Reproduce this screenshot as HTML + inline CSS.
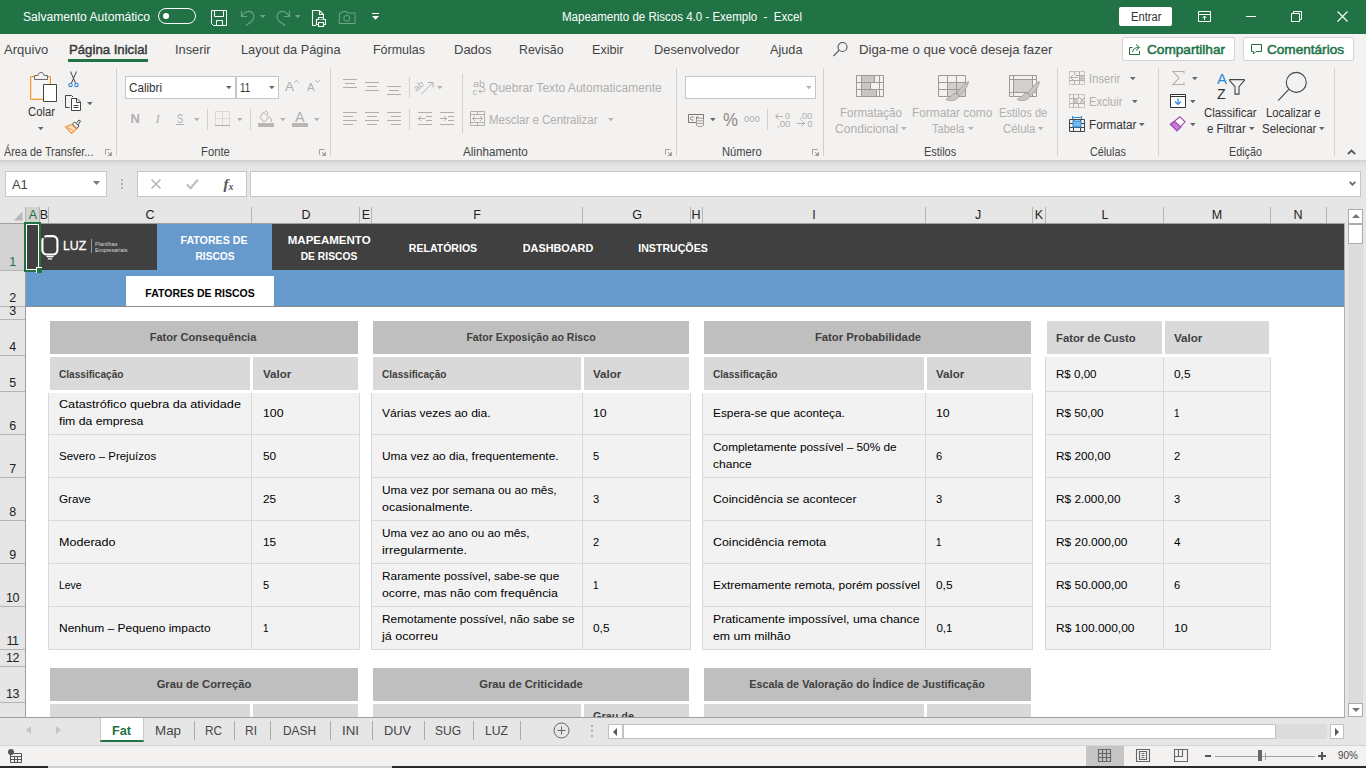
<!DOCTYPE html>
<html lang="pt-BR"><head><meta charset="utf-8"><title>Mapeamento de Riscos 4.0 - Exemplo - Excel</title>
<style>
*{box-sizing:border-box;margin:0;padding:0}
html,body{width:1366px;height:768px;overflow:hidden;background:#f3f2f1}
body{font-family:"Liberation Sans",sans-serif;font-size:12px;color:#3b3b3b;position:relative}
.a{position:absolute;white-space:nowrap}
.t{position:absolute;white-space:nowrap;line-height:1;transform-origin:left center}
.tc{position:absolute;white-space:nowrap;line-height:1;text-align:center;transform-origin:center center}
svg{position:absolute;overflow:visible}
.sep{position:absolute;width:1px;background:#d2d0ce}
.dd{position:absolute;width:5.6px;height:3.3px;color:#666;background:currentColor;clip-path:polygon(0 0,100% 0,50% 100%)}
.dd.g{color:#b5b3b1}
</style></head>
<body>
<div class="a" style="left:0px;top:0px;width:1366px;height:34px;background:#217346;"></div>
<div class="t" style="top:11.00px;font-size:12px;color:#fff;left:23.00px;transform:scaleX(1.0073);">Salvamento Automático</div>
<div class="a" style="left:158px;top:8px;width:38px;height:16px;border:1px solid #fff;border-radius:8px"></div>
<div class="a" style="left:163px;top:13px;width:6px;height:6px;border-radius:3px;background:#fff"></div>
<svg style="left:211px;top:10px" width="16" height="16" viewBox="0 0 16 16" fill="none" stroke="#fff" stroke-width="1"><path d="M0.500 0.500h15v15h-13l-2-2z"/><path d="M3.500 0.500v6h9v-6"/><path d="M5.500 15.500v-5h6v5"/></svg>
<svg style="left:240px;top:10px" width="16" height="16" viewBox="0 0 16 16" fill="none" stroke="#6fa585" stroke-width="1.100"><path d="M1.500 1v5.500h5.500"/><path d="M2 6C4 2 8.500 0 12 2.500c3 2.500 2.500 6-0.500 9L6 15.500"/></svg>
<div class="dd" style="left:260px;top:15px;color:#6fa585"></div>
<svg style="left:275px;top:10px" width="16" height="16" viewBox="0 0 16 16" fill="none" stroke="#6fa585" stroke-width="1.100"><path d="M14.500 1v5.500h-5.500"/><path d="M14 6C12 2 7.500 0 4 2.500c-3 2.500-2.500 6 0.500 9L10 15.500"/></svg>
<div class="dd" style="left:295px;top:15px;color:#6fa585"></div>
<svg style="left:311px;top:9.500px" width="16" height="17" viewBox="0 0 16 17" fill="none" stroke="#fff" stroke-width="1.100"><path d="M5 15.500h-3.500v-15h7l4 4v3"/><path d="M8.500 0.500v4h4"/><path d="M5.500 9.500h9v5h-9z" fill="#217346"/><path d="M7.500 9.500v-2h5v2M7.500 12.500h5v4h-5z" fill="#217346"/></svg>
<svg style="left:339px;top:11px" width="17" height="13" viewBox="0 0 17 13" fill="none" stroke="#6fa585" stroke-width="1"><path d="M0.500 2h2l0.500-1.500h4.500l0.500 1.500h8v10.500h-16z"/><circle cx="7.800" cy="7.300" r="3"/></svg>
<div class="a" style="left:372px;top:13px;width:7px;height:1px;background:#fff"></div><div class="dd" style="left:372px;top:16px;width:7px;height:3.700px;color:#fff"></div>
<div class="t" style="top:11.00px;font-size:12px;color:#fff;left:562.00px;transform:scaleX(0.9596);">Mapeamento de Riscos 4.0 - Exemplo  -  Excel</div>
<div class="a" style="left:1119px;top:7px;width:53px;height:19px;background:#fff;border-radius:2px;"></div>
<div class="t" style="top:11.00px;font-size:12px;color:#333;left:1130.60px;transform:scaleX(0.9300);">Entrar</div>
<svg style="left:1198px;top:11px" width="13" height="11" viewBox="0 0 13 11" fill="none" stroke="#fff" stroke-width="1"><path d="M0.500 0.500h12v10h-12z"/><path d="M0.500 3.500h12"/><path d="M6.500 9v-4M4.500 7l2-2 2 2"/></svg>
<div class="a" style="left:1246px;top:16px;width:10px;height:1px;background:#fff;"></div>
<svg style="left:1291px;top:11px" width="11" height="11" viewBox="0 0 11 11" fill="none" stroke="#fff" stroke-width="1"><path d="M0.500 2.500h8v8h-8z"/><path d="M2.500 2.500v-2h8v8h-2"/></svg>
<svg style="left:1337px;top:11px" width="11" height="11" viewBox="0 0 11 11" fill="none" stroke="#fff" stroke-width="1.100"><path d="M0.500 0.500l10 10M10.500 0.500l-10 10"/></svg>
<div class="t" style="top:43.00px;font-size:13px;color:#444;left:4.10px;">Arquivo</div>
<div class="t" style="top:43.00px;font-size:13px;color:#444;left:175.00px;transform:scaleX(0.9827);">Inserir</div>
<div class="t" style="top:43.00px;font-size:13px;color:#444;left:241.00px;transform:scaleX(0.9832);">Layout da Página</div>
<div class="t" style="top:43.00px;font-size:13px;color:#444;left:372.50px;transform:scaleX(0.9596);">Fórmulas</div>
<div class="t" style="top:43.00px;font-size:13px;color:#444;left:454.00px;">Dados</div>
<div class="t" style="top:43.00px;font-size:13px;color:#444;left:519.00px;transform:scaleX(0.9474);">Revisão</div>
<div class="t" style="top:43.00px;font-size:13px;color:#444;left:592.00px;transform:scaleX(0.9688);">Exibir</div>
<div class="t" style="top:43.00px;font-size:13px;color:#444;left:653.50px;transform:scaleX(0.9859);">Desenvolvedor</div>
<div class="t" style="top:43.00px;font-size:13px;color:#444;left:770.00px;transform:scaleX(0.9774);">Ajuda</div>
<div class="t" style="top:43.00px;font-size:13px;color:#3a3a3a;left:68.50px;transform:scaleX(1.0139);-webkit-text-stroke:0.45px #3a3a3a;">Página Inicial</div>
<div class="a" style="left:68px;top:59px;width:80px;height:3px;background:#217346;"></div>
<svg style="left:832px;top:41px" width="17" height="17" viewBox="0 0 17 17" fill="none" stroke="#555" stroke-width="1.100"><circle cx="10.500" cy="6" r="4.500"/><path d="M7.300 9.200L1.500 15"/></svg>
<div class="t" style="top:43.00px;font-size:13px;color:#444;left:859.00px;transform:scaleX(1.0143);">Diga-me o que você deseja fazer</div>
<div class="a" style="left:1122px;top:37px;width:113px;height:24px;background:#fff;border:1px solid #d6d4d2;border-radius:2px"></div>
<svg style="left:1129px;top:43px" width="13" height="13" viewBox="0 0 13 13" fill="none" stroke="#217346" stroke-width="1"><path d="M3.500 4.500h-3v7h10v-3.500"/><path d="M3.500 9c0.500-3 2.500-4.500 6-4.500M7 1.500l3.500 3-3.500 3"/></svg>
<div class="t" style="top:43.00px;font-size:13px;color:#217346;left:1146.50px;transform:scaleX(1.0481);-webkit-text-stroke:0.5px #217346;">Compartilhar</div>
<div class="a" style="left:1243px;top:37px;width:111px;height:24px;background:#fff;border:1px solid #d6d4d2;border-radius:2px"></div>
<svg style="left:1251px;top:44px" width="12" height="11" viewBox="0 0 12 11" fill="none" stroke="#217346" stroke-width="1"><path d="M0.500 0.500h10v7h-5.500l-2.500 2.500v-2.500h-2z"/></svg>
<div class="t" style="top:43.00px;font-size:13px;color:#217346;left:1267.00px;transform:scaleX(1.0447);-webkit-text-stroke:0.5px #217346;">Comentários</div>
<svg style="left:29px;top:72px" width="28" height="30" viewBox="0 0 28 30" fill="none"><path d="M1.500 4.500h20v23h-20z" fill="#f8f7f6" stroke="#ee9b45" stroke-width="1"/><path d="M2.500 5.500h18v21h-18z" stroke="#fbd9a5" stroke-width="1"/><path d="M5.500 7.500v-4h3.500c0-4 6-4 6 0h3.500v4z" fill="#f3f2f1" stroke="#6b6b6b" stroke-width="1"/><path d="M14.500 12.500h13v17h-13z" fill="#fff" stroke="#444" stroke-width="1"/></svg>
<div class="t" style="top:106.00px;font-size:12px;color:#333;left:27.80px;transform:scaleX(0.9412);">Colar</div>
<div class="dd " style="left:38px;top:127px"></div>
<svg style="left:68px;top:71px" width="11" height="17" viewBox="0 0 11 17" fill="none"><path d="M2.500 0.500l5 11.500M8.500 0.500l-5 11.500" stroke="#444" stroke-width="1"/><circle cx="2.500" cy="14" r="1.700" stroke="#2b88d8" stroke-width="1.100"/><circle cx="8.500" cy="14" r="1.700" stroke="#2b88d8" stroke-width="1.100"/></svg>
<svg style="left:65px;top:95px" width="17" height="16" viewBox="0 0 17 16" fill="none" stroke="#444" stroke-width="1"><path d="M4.500 12.500h-4v-12h6l1.500 1.500"/><path d="M6.500 3.500h5.500l3.500 3.500v8.500h-9z" fill="#fff"/><path d="M11.500 3.500v4h4"/><path d="M8.500 10.500h5M8.500 12.500h5"/></svg>
<div class="dd " style="left:87px;top:102px"></div>
<svg style="left:65px;top:119px" width="17" height="15" viewBox="0 0 17 15" fill="none"><path d="M11 4.500l3-3.500 1.500 1-2.500 4" stroke="#444" stroke-width="1" fill="#fff"/><path d="M7.500 5l2-2 4.500 4-2 2.500z" stroke="#444" stroke-width="1" fill="#fff"/><path d="M6.500 5.500l5 4.500-5 4.500-6-6.500z" stroke="#ee9b45" stroke-width="1.200" fill="#fbe3c6"/><path d="M2.500 8.500l6 3" stroke="#ee9b45" stroke-width="1"/></svg>
<div class="t" style="top:146.00px;font-size:12px;color:#444;left:4.40px;transform:scaleX(0.9056);">Área de Transfer...</div>
<svg style="left:105px;top:149px" width="7" height="7" viewBox="0 0 7 7" fill="none" stroke="#a19f9d" stroke-width="1"><path d="M0.500 5.500v-5h5"/><path d="M3 3l2.500 2.500"/><path d="M7 2.500v4.500h-4.500z" fill="#a19f9d" stroke="none"/></svg>
<div class="sep" style="left:116px;top:68px;height:88px"></div>
<div class="a" style="left:125px;top:76px;width:111px;height:23px;background:#fff;border:1px solid #c8c6c4"></div>
<div class="a" style="left:236px;top:76px;width:43px;height:23px;background:#fff;border:1px solid #c8c6c4"></div>
<div class="t" style="top:82.00px;font-size:12px;color:#333;left:128.80px;transform:scaleX(0.9731);">Calibri</div>
<div class="dd " style="left:226px;top:86px"></div>
<div class="t" style="top:82.00px;font-size:12px;color:#333;left:239.60px;transform:scaleX(0.8180);">11</div>
<div class="dd " style="left:269px;top:86px"></div>
<div class="t" style="top:81.00px;font-size:12.5px;color:#b1afad;left:285.40px;transform:scaleX(1.0787);">A</div>
<svg style="left:294px;top:80px" width="5" height="3" viewBox="0 0 5 3" fill="none" stroke="#b1afad"><path d="M0.300 2.700l2.200-2.200 2.200 2.200"/></svg>
<div class="t" style="top:83.00px;font-size:10px;color:#b1afad;left:307.30px;transform:scaleX(1.1241);">A</div>
<svg style="left:315px;top:80px" width="5" height="3" viewBox="0 0 5 3" fill="none" stroke="#b1afad"><path d="M0.300 0.300l2.200 2.200 2.200-2.200"/></svg>
<div class="t" style="top:112.00px;font-size:13px;color:#b1afad;font-weight:bold;left:130.60px;">N</div>
<div class="t" style="top:112.00px;font-size:13px;color:#b1afad;left:155.50px;font-style:italic;font-family:'Liberation Serif',serif;">I</div>
<div class="t" style="top:112.00px;font-size:13px;color:#b1afad;left:176.90px;transform:scaleX(0.7150);">S</div>
<div class="a" style="left:176px;top:124px;width:8px;height:1px;background:#b1afad;"></div>
<div class="dd g" style="left:194px;top:118px"></div>
<div class="sep" style="left:207px;top:109px;height:21px"></div>
<svg style="left:215px;top:111px" width="15" height="15" viewBox="0 0 15 15" fill="none" stroke="#c4c2c0" stroke-width="1"><path d="M0.500 14.500v-14h14v14M7.500 0.500v14M0.500 7.500h14" stroke-dasharray="1 1"/><path d="M0 14.500h15" stroke="#b1afad"/></svg>
<div class="dd g" style="left:237px;top:118px"></div>
<div class="sep" style="left:250px;top:109px;height:21px"></div>
<svg style="left:258px;top:111px" width="16" height="16" viewBox="0 0 16 16" fill="none"><path d="M5.500 1l5.500 5.500-5 4.500-4-4.500z" stroke="#b1afad" stroke-width="1"/><path d="M7 0.500c2-1 3.500 1 2.500 3" stroke="#b1afad"/><path d="M11.500 6c2 1.500 2.500 3.500 1.500 5" stroke="#b1afad"/><rect x="0" y="12" width="16" height="4" fill="#b9b7b5"/></svg>
<div class="dd g" style="left:280px;top:118px"></div>
<div class="t" style="top:110.00px;font-size:14.3px;color:#b1afad;left:295.40px;transform:scaleX(1.0056);">A</div>
<div class="a" style="left:292px;top:123px;width:16px;height:4px;background:#b9b7b5;"></div>
<div class="dd g" style="left:314px;top:118px"></div>
<div class="t" style="top:146.00px;font-size:12px;color:#444;left:200.60px;transform:scaleX(0.9385);">Fonte</div>
<svg style="left:319px;top:149px" width="7" height="7" viewBox="0 0 7 7" fill="none" stroke="#a19f9d" stroke-width="1"><path d="M0.500 5.500v-5h5"/><path d="M3 3l2.500 2.500"/><path d="M7 2.500v4.500h-4.500z" fill="#a19f9d" stroke="none"/></svg>
<div class="sep" style="left:330px;top:68px;height:88px"></div>
<div class="a" style="left:343px;top:79px;width:14px;height:1px;background:#b1afad;"></div>
<div class="a" style="left:345px;top:83px;width:10px;height:1px;background:#b1afad;"></div>
<div class="a" style="left:343px;top:87px;width:14px;height:1px;background:#b1afad;"></div>
<div class="a" style="left:365px;top:82px;width:14px;height:1px;background:#b1afad;"></div>
<div class="a" style="left:367px;top:86px;width:10px;height:1px;background:#b1afad;"></div>
<div class="a" style="left:365px;top:90px;width:14px;height:1px;background:#b1afad;"></div>
<div class="a" style="left:387px;top:86px;width:14px;height:1px;background:#b1afad;"></div>
<div class="a" style="left:389px;top:90px;width:10px;height:1px;background:#b1afad;"></div>
<div class="a" style="left:387px;top:94px;width:14px;height:1px;background:#b1afad;"></div>
<div class="sep" style="left:409px;top:77px;height:21px"></div>
<svg style="left:417px;top:79px" width="17" height="15" viewBox="0 0 17 15" fill="none" stroke="#b1afad" stroke-width="1"><path d="M4.500 15l11-11M11 3.500h5v5"/></svg>
<div class="t" style="top:84.00px;font-size:9px;color:#b1afad;left:418.00px;transform:rotate(-40deg);transform-origin:left bottom;">ab</div>
<div class="dd g" style="left:437px;top:86px"></div>
<div class="a" style="left:343px;top:112px;width:14px;height:1px;background:#b1afad;"></div>
<div class="a" style="left:343px;top:116px;width:10px;height:1px;background:#b1afad;"></div>
<div class="a" style="left:343px;top:120px;width:14px;height:1px;background:#b1afad;"></div>
<div class="a" style="left:343px;top:124px;width:10px;height:1px;background:#b1afad;"></div>
<div class="a" style="left:365px;top:112px;width:14px;height:1px;background:#b1afad;"></div>
<div class="a" style="left:367px;top:116px;width:10px;height:1px;background:#b1afad;"></div>
<div class="a" style="left:365px;top:120px;width:14px;height:1px;background:#b1afad;"></div>
<div class="a" style="left:367px;top:124px;width:10px;height:1px;background:#b1afad;"></div>
<div class="a" style="left:387px;top:112px;width:14px;height:1px;background:#b1afad;"></div>
<div class="a" style="left:391px;top:116px;width:10px;height:1px;background:#b1afad;"></div>
<div class="a" style="left:387px;top:120px;width:14px;height:1px;background:#b1afad;"></div>
<div class="a" style="left:391px;top:124px;width:10px;height:1px;background:#b1afad;"></div>
<div class="sep" style="left:409px;top:109px;height:21px"></div>
<div class="a" style="left:418px;top:112px;width:14px;height:1px;background:#b1afad;"></div>
<div class="a" style="left:426px;top:116px;width:6px;height:1px;background:#b1afad;"></div>
<div class="a" style="left:426px;top:120px;width:6px;height:1px;background:#b1afad;"></div>
<div class="a" style="left:418px;top:124px;width:14px;height:1px;background:#b1afad;"></div>
<svg style="left:418px;top:115px" width="8" height="7" viewBox="0 0 8 7" fill="none" stroke="#b1afad" stroke-width="1"><path d="M7 3.500h-6.500M3 1l-2.500 2.500 2.500 2.500"/></svg>
<div class="a" style="left:440px;top:112px;width:14px;height:1px;background:#b1afad;"></div>
<div class="a" style="left:448px;top:116px;width:6px;height:1px;background:#b1afad;"></div>
<div class="a" style="left:448px;top:120px;width:6px;height:1px;background:#b1afad;"></div>
<div class="a" style="left:440px;top:124px;width:14px;height:1px;background:#b1afad;"></div>
<svg style="left:440px;top:115px" width="8" height="7" viewBox="0 0 8 7" fill="none" stroke="#b1afad" stroke-width="1"><path d="M0 3.500h6.500M4 1l2.500 2.500-2.500 2.500"/></svg>
<div class="sep" style="left:462px;top:74px;height:59px"></div>
<div class="t" style="top:79.00px;font-size:9.5px;color:#b1afad;left:472.50px;transform:scaleX(1.1250);">ab</div>
<div class="t" style="top:87.00px;font-size:9.5px;color:#b1afad;left:472.50px;">c</div>
<svg style="left:477px;top:87px" width="9" height="8" viewBox="0 0 9 8" fill="none" stroke="#b1afad" stroke-width="1"><path d="M2 4.500h4a2 2 0 0 0 0-4h-1"/><path d="M4 2.500l-2 2 2 2"/></svg>
<div class="t" style="top:82.00px;font-size:12px;color:#b1afad;left:489.40px;transform:scaleX(1.0048);">Quebrar Texto Automaticamente</div>
<svg style="left:470px;top:111px" width="15" height="15" viewBox="0 0 15 15" fill="none" stroke="#b1afad" stroke-width="1"><path d="M0.500 0.500h14v14h-14z"/><path d="M0.500 3.500h14M0.500 11.500h14M7.500 0.500v3M7.500 11.500v3"/><path d="M2.500 7.500h10M5 5l-2.500 2.500 2.500 2.500M10 5l2.500 2.500-2.500 2.500"/></svg>
<div class="t" style="top:114.00px;font-size:12px;color:#b1afad;left:489.40px;transform:scaleX(0.9570);">Mesclar e Centralizar</div>
<div class="dd g" style="left:608px;top:118px"></div>
<div class="t" style="top:146.00px;font-size:12px;color:#444;left:462.50px;transform:scaleX(0.9712);">Alinhamento</div>
<svg style="left:665px;top:149px" width="7" height="7" viewBox="0 0 7 7" fill="none" stroke="#a19f9d" stroke-width="1"><path d="M0.500 5.500v-5h5"/><path d="M3 3l2.500 2.500"/><path d="M7 2.500v4.500h-4.500z" fill="#a19f9d" stroke="none"/></svg>
<div class="sep" style="left:676px;top:68px;height:88px"></div>
<div class="a" style="left:685px;top:76px;width:131px;height:23px;background:#fff;border:1px solid #c8c6c4"></div>
<div class="dd g" style="left:806px;top:86px"></div>
<svg style="left:688px;top:114px" width="16" height="13" viewBox="0 0 16 13" fill="none" stroke="#797775" stroke-width="1"><path d="M0.500 0.500h15v8h-15z"/><path d="M5.500 3c-2-0.500-3 0.500-3 1.500s1 2 3 1.500M8.500 6v-3h2"/><path d="M8.500 5.500v6c1.500 1.500 5.500 1.500 7 0v-6" fill="#f3f2f1" stroke="#a19f9d"/><ellipse cx="12" cy="5.500" rx="3.500" ry="1.500" fill="#f3f2f1" stroke="#a19f9d"/><path d="M8.500 8.500c1.500 1.500 5.500 1.500 7 0" stroke="#a19f9d"/></svg>
<div class="dd " style="left:710px;top:118px"></div>
<div class="t" style="top:110.00px;font-size:19px;color:#8a8886;left:722.50px;transform:scaleX(0.8872);">%</div>
<div class="t" style="top:114.00px;font-size:9.5px;color:#b1afad;left:744.00px;">000</div>
<div class="sep" style="left:767px;top:109px;height:21px"></div>
<svg style="left:775px;top:113px" width="9" height="7" viewBox="0 0 9 7" fill="none" stroke="#b1afad" stroke-width="1"><path d="M8 3.500h-7M3.500 0.500l-3 3 3 3"/></svg>
<div class="t" style="top:112.00px;font-size:9px;color:#b1afad;left:785.00px;">0</div>
<div class="t" style="top:120.00px;font-size:9px;color:#b1afad;left:776.50px;transform:scaleX(1.0787);">,00</div>
<svg style="left:797px;top:120px" width="9" height="7" viewBox="0 0 9 7" fill="none" stroke="#b1afad" stroke-width="1"><path d="M0 3.500h7M4.500 0.500l3 3-3 3"/></svg>
<div class="t" style="top:112.00px;font-size:9px;color:#b1afad;left:798.50px;transform:scaleX(1.0787);">,00</div>
<div class="t" style="top:120.00px;font-size:9px;color:#b1afad;left:807.50px;">0</div>
<div class="t" style="top:146.00px;font-size:12px;color:#444;left:721.60px;transform:scaleX(0.9300);">Número</div>
<svg style="left:812px;top:149px" width="7" height="7" viewBox="0 0 7 7" fill="none" stroke="#a19f9d" stroke-width="1"><path d="M0.500 5.500v-5h5"/><path d="M3 3l2.500 2.500"/><path d="M7 2.500v4.500h-4.500z" fill="#a19f9d" stroke="none"/></svg>
<div class="sep" style="left:823px;top:68px;height:88px"></div>
<svg style="left:856px;top:75px" width="28" height="22" viewBox="0 0 28 22" fill="none" stroke="#9d9b99" stroke-width="1"><rect x="6" y="1" width="12" height="6" fill="#c8c6c4" stroke="none"/><rect x="6" y="8" width="8" height="6" fill="#c8c6c4" stroke="none"/><rect x="6" y="15" width="14" height="6" fill="#c8c6c4" stroke="none"/><path d="M0.500 0.500h27v21h-27z"/><path d="M0.500 7.500h27M0.500 14.500h27M5.500 0.500v21M18.500 0.500v7M23.500 0.500v21M14.500 7.500v7M20.500 14.500v7"/></svg>
<div class="t" style="top:107.00px;font-size:12px;color:#b1afad;left:839.50px;transform:scaleX(0.9683);">Formatação</div>
<div class="t" style="top:123.00px;font-size:12px;color:#b1afad;left:834.80px;transform:scaleX(1.0077);">Condicional</div>
<div class="dd g" style="left:901px;top:127px"></div>
<svg style="left:938px;top:75px" width="31" height="27" viewBox="0 0 31 27" fill="none" stroke="#9d9b99" stroke-width="1"><rect x="10" y="8" width="17" height="13" fill="#d2d0ce" stroke="none"/><path d="M0.500 0.500h27v21h-27z"/><path d="M0.500 7.500h27M0.500 14.500h27M9.500 0.500v21M18.500 0.500v21"/><path d="M30.500 6.500c-4 2-9 7-11.500 11.500l2.500 2.500c4-3 8-8 9-14z" fill="#c8c6c4" stroke="#9d9b99" stroke-width="0.800"/><path d="M18.500 18.500c-4-1-4.500 3.500-10.500 6 4.500 2 11 1.500 13-3.500z" fill="#c8c6c4" stroke="#9d9b99" stroke-width="0.800"/></svg>
<div class="t" style="top:107.00px;font-size:12px;color:#b1afad;left:911.70px;transform:scaleX(0.9870);">Formatar como</div>
<div class="t" style="top:123.00px;font-size:12px;color:#b1afad;left:932.30px;transform:scaleX(0.9187);">Tabela</div>
<div class="dd g" style="left:968px;top:127px"></div>
<svg style="left:1009px;top:75px" width="31" height="27" viewBox="0 0 31 27" fill="none" stroke="#9d9b99" stroke-width="1"><rect x="5" y="5" width="18" height="12" fill="#d2d0ce" stroke="none"/><path d="M0.500 0.500h27v21h-27z"/><path d="M0.500 4.500h27M0.500 17.500h27M4.500 0.500v21M23.500 0.500v21"/><path d="M30.500 6.500c-4 2-9 7-11.500 11.500l2.500 2.500c4-3 8-8 9-14z" fill="#c8c6c4" stroke="#9d9b99" stroke-width="0.800"/><path d="M18.500 18.500c-4-1-4.500 3.500-10.500 6 4.500 2 11 1.500 13-3.500z" fill="#c8c6c4" stroke="#9d9b99" stroke-width="0.800"/></svg>
<div class="t" style="top:107.00px;font-size:12px;color:#b1afad;left:998.50px;transform:scaleX(0.9283);">Estilos de</div>
<div class="t" style="top:123.00px;font-size:12px;color:#b1afad;left:1002.60px;transform:scaleX(0.9521);">Célula</div>
<div class="dd g" style="left:1038px;top:127px"></div>
<div class="t" style="top:146.00px;font-size:12px;color:#444;left:924.40px;transform:scaleX(0.9082);">Estilos</div>
<div class="sep" style="left:1057px;top:68px;height:88px"></div>
<svg style="left:1069px;top:71px" width="16" height="14" viewBox="0 0 16 14" fill="none" stroke="#b1afad" stroke-width="1"><rect x="10" y="4" width="5" height="5" fill="#c8c6c4" stroke="none"/><path d="M0.500 0.500h15v13h-15z" stroke-dasharray="2 1"/><path d="M5.500 0.500v3M5.500 9.500v4M10.500 0.500v13M0.500 9.500h15M6 4.500h10"/><path d="M9 6.500h-7.500M4 4l-2.500 2.500 2.500 2.500"/></svg>
<div class="t" style="top:73.00px;font-size:12px;color:#b1afad;left:1088.50px;transform:scaleX(0.9387);">Inserir</div>
<div class="dd " style="left:1130px;top:77px"></div>
<svg style="left:1069px;top:94px" width="16" height="14" viewBox="0 0 16 14" fill="none" stroke="#b1afad" stroke-width="1"><rect x="4" y="5" width="5" height="4" fill="#c8c6c4" stroke="none"/><path d="M0.500 0.500h15v13h-15z" stroke-dasharray="2 1"/><path d="M4.500 0.500v13M9.500 0.500v4M9.500 9.500v4M0.500 4.500h9M0.500 9.500h15"/><path d="M10.500 3.500l5 6M15.500 3.500l-5 6" stroke-width="1.100"/></svg>
<div class="t" style="top:96.00px;font-size:12px;color:#b1afad;left:1088.50px;transform:scaleX(0.9274);">Excluir</div>
<div class="dd " style="left:1132px;top:100px"></div>
<svg style="left:1069px;top:116px" width="16" height="16" viewBox="0 0 16 16" fill="none" stroke="#444" stroke-width="1"><path d="M3.500 0v3M12.500 0v3M4 1.500h8" stroke="#2b88d8"/><path d="M0.500 3.500h15v12h-15z"/><path d="M4.500 3.500v12M11.500 3.500v12M0.500 7.500h15M0.500 11.500h15"/><rect x="4" y="5" width="8" height="6" fill="#7ab8ea" stroke="#2b88d8"/></svg>
<div class="t" style="top:119.00px;font-size:12px;color:#333;left:1088.50px;transform:scaleX(0.9736);">Formatar</div>
<div class="dd " style="left:1139px;top:123px"></div>
<div class="t" style="top:146.00px;font-size:12px;color:#444;left:1089.60px;transform:scaleX(0.8943);">Células</div>
<div class="sep" style="left:1158px;top:68px;height:88px"></div>
<svg style="left:1172px;top:71px" width="13" height="14" viewBox="0 0 13 14" fill="none" stroke="#b1afad" stroke-width="1.100"><path d="M12 2.500v-2h-11l6 6.500-6 6.500h11v-2"/></svg>
<div class="dd " style="left:1192px;top:77px"></div>
<svg style="left:1170px;top:94px" width="16" height="14" viewBox="0 0 16 14" fill="none" stroke="#333" stroke-width="1"><path d="M0.500 0.500h15v13h-15z" fill="#fff"/><path d="M0.500 2.500h15"/><path d="M8 4.500v6M5 7.500l3 3 3-3" stroke="#2b88d8" stroke-width="1.200"/></svg>
<div class="dd " style="left:1190px;top:100px"></div>
<svg style="left:1170px;top:116px" width="16" height="16" viewBox="0 0 16 16" fill="none" stroke="#a33fb3" stroke-width="1.100"><path d="M10 0.800l5 5-8 9-6.500-6.500z" fill="#fff"/><path d="M4.500 5.500l6.500 5.500-4 3.800-6.500-6.500z" fill="#c77dd6"/></svg>
<div class="dd " style="left:1190px;top:123px"></div>
<div class="t" style="top:71.00px;font-size:15.3px;color:#2b88d8;left:1217.00px;transform:scaleX(0.9703);">A</div>
<div class="t" style="top:86.00px;font-size:15px;color:#333;left:1217.30px;transform:scaleX(0.9486);">Z</div>
<svg style="left:1229px;top:79px" width="16" height="16" viewBox="0 0 16 16" fill="none" stroke="#444" stroke-width="1.100"><path d="M1 0.600h14c0.600 0 0.700 0.500 0.300 1l-5.300 6v7.500h-4v-7.500l-5.300-6c-0.400-0.500-0.300-1 0.300-1z"/></svg>
<div class="t" style="top:107.00px;font-size:12px;color:#333;left:1204.40px;transform:scaleX(0.9504);">Classificar</div>
<div class="t" style="top:123.00px;font-size:12px;color:#333;left:1207.30px;transform:scaleX(0.9515);">e Filtrar</div>
<div class="dd " style="left:1249px;top:127px"></div>
<svg style="left:1277px;top:71px" width="30" height="30" viewBox="0 0 30 30" fill="none" stroke="#444" stroke-width="1.100"><circle cx="19.300" cy="11.400" r="10"/><path d="M11.800 18.300l-10.600 11.300"/></svg>
<div class="t" style="top:107.00px;font-size:12px;color:#333;left:1266.40px;transform:scaleX(0.9409);">Localizar e</div>
<div class="t" style="top:123.00px;font-size:12px;color:#333;left:1262.00px;transform:scaleX(0.9594);">Selecionar</div>
<div class="dd " style="left:1319px;top:127px"></div>
<div class="t" style="top:146.00px;font-size:12px;color:#444;left:1229.40px;transform:scaleX(0.8964);">Edição</div>
<div class="sep" style="left:1334px;top:68px;height:88px"></div>
<svg style="left:1347px;top:149px" width="9" height="6" viewBox="0 0 9 6" fill="none" stroke="#555" stroke-width="1.800"><path d="M0.800 5.200l3.700-3.700 3.700 3.700"/></svg>
<div class="a" style="left:0px;top:160px;width:1366px;height:64px;background:#e6e6e6;"></div>
<div class="a" style="left:0;top:160px;width:1366px;height:7px;background:linear-gradient(#cfcfcf,#dedede 40%,#e6e6e6)"></div>
<div class="a" style="left:5px;top:171px;width:102px;height:26px;background:#fff;border:1px solid #c6c6c6"></div>
<div class="t" style="top:178.00px;font-size:13px;color:#444;left:11.90px;">A1</div>
<div class="dd" style="left:93px;top:181px;width:7px;height:4px;color:#777"></div>
<div class="a" style="left:121px;top:179px;width:2px;height:2px;background:#b0b0b0;"></div>
<div class="a" style="left:121px;top:183px;width:2px;height:2px;background:#b0b0b0;"></div>
<div class="a" style="left:121px;top:187px;width:2px;height:2px;background:#b0b0b0;"></div>
<div class="a" style="left:137px;top:171px;width:110px;height:26px;background:#fff;border:1px solid #c6c6c6"></div>
<svg style="left:151px;top:179px" width="10" height="10" viewBox="0 0 10 10" fill="none" stroke="#b5b5b5" stroke-width="1.500"><path d="M0.500 0.500l9 9M9.500 0.500l-9 9"/></svg>
<svg style="left:186px;top:179px" width="13" height="10" viewBox="0 0 13 10" fill="none" stroke="#bdbdbd" stroke-width="2"><path d="M0.800 5.500l3.700 3.700 7.500-8.500"/></svg>
<div class="t" style="top:177.00px;font-size:15px;color:#555;font-weight:bold;left:223.50px;font-style:italic;font-family:'Liberation Serif',serif;">f</div>
<div class="t" style="top:182.00px;font-size:10px;color:#555;font-weight:bold;left:228.50px;font-style:italic;font-family:'Liberation Serif',serif;">x</div>
<div class="a" style="left:250px;top:171px;width:1111px;height:26px;background:#fff;border:1px solid #c6c6c6"></div>
<svg style="left:1349px;top:181px" width="7" height="5" viewBox="0 0 7 5" fill="none" stroke="#666" stroke-width="1.800"><path d="M0.700 0.800l2.800 3 2.800-3"/></svg>
<div class="a" style="left:0;top:207px;width:1345px;height:17px;background:#e6e6e6;border-bottom:1px solid #9f9f9f"></div>
<div class="a" style="left:26px;top:207px;width:14px;height:16px;background:#d2d2d2;"></div>
<svg style="left:13px;top:211px" width="10" height="10" viewBox="0 0 10 10"><path d="M9.500 0.500v9h-9z" fill="#b9b9b9"/></svg>
<div class="tc" style="top:209.00px;font-size:12.5px;color:#217346;left:-167.00px;width:400px;"><span>A</span></div>
<div class="tc" style="top:209.00px;font-size:12.5px;color:#222;left:-156.00px;width:400px;"><span>B</span></div>
<div class="tc" style="top:209.00px;font-size:12.5px;color:#222;left:-50.00px;width:400px;"><span>C</span></div>
<div class="tc" style="top:209.00px;font-size:12.5px;color:#222;left:106.00px;width:400px;"><span>D</span></div>
<div class="tc" style="top:209.00px;font-size:12.5px;color:#222;left:166.00px;width:400px;"><span>E</span></div>
<div class="tc" style="top:209.00px;font-size:12.5px;color:#222;left:277.00px;width:400px;"><span>F</span></div>
<div class="tc" style="top:209.00px;font-size:12.5px;color:#222;left:437.00px;width:400px;"><span>G</span></div>
<div class="tc" style="top:209.00px;font-size:12.5px;color:#222;left:496.00px;width:400px;"><span>H</span></div>
<div class="tc" style="top:209.00px;font-size:12.5px;color:#222;left:614.00px;width:400px;"><span>I</span></div>
<div class="tc" style="top:209.00px;font-size:12.5px;color:#222;left:778.00px;width:400px;"><span>J</span></div>
<div class="tc" style="top:209.00px;font-size:12.5px;color:#222;left:839.00px;width:400px;"><span>K</span></div>
<div class="tc" style="top:209.00px;font-size:12.5px;color:#222;left:905.00px;width:400px;"><span>L</span></div>
<div class="tc" style="top:209.00px;font-size:12.5px;color:#222;left:1017.00px;width:400px;"><span>M</span></div>
<div class="tc" style="top:209.00px;font-size:12.5px;color:#222;left:1098.00px;width:400px;"><span>N</span></div>
<div class="a" style="left:25px;top:207px;width:1px;height:16px;background:#b4b4b4;"></div>
<div class="a" style="left:39px;top:207px;width:1px;height:16px;background:#b4b4b4;"></div>
<div class="a" style="left:48px;top:207px;width:1px;height:16px;background:#b4b4b4;"></div>
<div class="a" style="left:251px;top:207px;width:1px;height:16px;background:#b4b4b4;"></div>
<div class="a" style="left:359px;top:207px;width:1px;height:16px;background:#b4b4b4;"></div>
<div class="a" style="left:371px;top:207px;width:1px;height:16px;background:#b4b4b4;"></div>
<div class="a" style="left:582px;top:207px;width:1px;height:16px;background:#b4b4b4;"></div>
<div class="a" style="left:690px;top:207px;width:1px;height:16px;background:#b4b4b4;"></div>
<div class="a" style="left:702px;top:207px;width:1px;height:16px;background:#b4b4b4;"></div>
<div class="a" style="left:925px;top:207px;width:1px;height:16px;background:#b4b4b4;"></div>
<div class="a" style="left:1032px;top:207px;width:1px;height:16px;background:#b4b4b4;"></div>
<div class="a" style="left:1045px;top:207px;width:1px;height:16px;background:#b4b4b4;"></div>
<div class="a" style="left:1163px;top:207px;width:1px;height:16px;background:#b4b4b4;"></div>
<div class="a" style="left:1270px;top:207px;width:1px;height:16px;background:#b4b4b4;"></div>
<div class="a" style="left:1326px;top:207px;width:1px;height:16px;background:#b4b4b4;"></div>
<div class="a" style="left:0;top:224px;width:26px;height:493px;background:#e6e6e6;border-right:1px solid #9f9f9f"></div>
<div class="a" style="left:0px;top:224px;width:25px;height:46px;background:#d2d2d2;"></div>
<div class="tc" style="top:256.00px;font-size:12.5px;color:#217346;left:-187.50px;width:400px;letter-spacing:-0.5px;"><span>1</span></div>
<div class="a" style="left:0px;top:270px;width:25px;height:1px;background:#b4b4b4;"></div>
<div class="tc" style="top:292.00px;font-size:12.5px;color:#222;left:-187.50px;width:400px;letter-spacing:-0.5px;"><span>2</span></div>
<div class="a" style="left:0px;top:306px;width:25px;height:1px;background:#b4b4b4;"></div>
<div class="tc" style="top:305.00px;font-size:12.5px;color:#222;left:-187.50px;width:400px;letter-spacing:-0.5px;"><span>3</span></div>
<div class="a" style="left:0px;top:319px;width:25px;height:1px;background:#b4b4b4;"></div>
<div class="tc" style="top:341.00px;font-size:12.5px;color:#222;left:-187.50px;width:400px;letter-spacing:-0.5px;"><span>4</span></div>
<div class="a" style="left:0px;top:355px;width:25px;height:1px;background:#b4b4b4;"></div>
<div class="tc" style="top:377.00px;font-size:12.5px;color:#222;left:-187.50px;width:400px;letter-spacing:-0.5px;"><span>5</span></div>
<div class="a" style="left:0px;top:391px;width:25px;height:1px;background:#b4b4b4;"></div>
<div class="tc" style="top:420.00px;font-size:12.5px;color:#222;left:-187.50px;width:400px;letter-spacing:-0.5px;"><span>6</span></div>
<div class="a" style="left:0px;top:434px;width:25px;height:1px;background:#b4b4b4;"></div>
<div class="tc" style="top:463.00px;font-size:12.5px;color:#222;left:-187.50px;width:400px;letter-spacing:-0.5px;"><span>7</span></div>
<div class="a" style="left:0px;top:477px;width:25px;height:1px;background:#b4b4b4;"></div>
<div class="tc" style="top:506.00px;font-size:12.5px;color:#222;left:-187.50px;width:400px;letter-spacing:-0.5px;"><span>8</span></div>
<div class="a" style="left:0px;top:520px;width:25px;height:1px;background:#b4b4b4;"></div>
<div class="tc" style="top:549.00px;font-size:12.5px;color:#222;left:-187.50px;width:400px;letter-spacing:-0.5px;"><span>9</span></div>
<div class="a" style="left:0px;top:563px;width:25px;height:1px;background:#b4b4b4;"></div>
<div class="tc" style="top:592.00px;font-size:12.5px;color:#222;left:-187.50px;width:400px;letter-spacing:-0.5px;"><span>10</span></div>
<div class="a" style="left:0px;top:606px;width:25px;height:1px;background:#b4b4b4;"></div>
<div class="tc" style="top:635.00px;font-size:12.5px;color:#222;left:-187.50px;width:400px;letter-spacing:-0.5px;"><span>11</span></div>
<div class="a" style="left:0px;top:649px;width:25px;height:1px;background:#b4b4b4;"></div>
<div class="tc" style="top:652.00px;font-size:12.5px;color:#222;left:-187.50px;width:400px;letter-spacing:-0.5px;"><span>12</span></div>
<div class="a" style="left:0px;top:666px;width:25px;height:1px;background:#b4b4b4;"></div>
<div class="tc" style="top:688.00px;font-size:12.5px;color:#222;left:-187.50px;width:400px;letter-spacing:-0.5px;"><span>13</span></div>
<div class="a" style="left:0px;top:702px;width:25px;height:1px;background:#b4b4b4;"></div>
<div class="a" style="left:26px;top:224px;width:1318px;height:493px;background:#fff;overflow:hidden">
<div class="a" style="left:-26px;top:-224px;width:1366px;height:768px">
<div class="a" style="left:26px;top:224px;width:1318px;height:46px;background:#404040;"></div>
<div class="a" style="left:157px;top:224px;width:115px;height:46px;background:#6699cc;"></div>
<div class="a" style="left:26px;top:270px;width:1318px;height:36px;background:#6699cc;"></div>
<div class="a" style="left:26px;top:306px;width:1318px;height:1px;background:#8c8c8c;"></div>
<div class="a" style="left:126px;top:276px;width:148px;height:30px;background:#fff;"></div>
<svg style="left:0px;top:0px" width="100" height="300" viewBox="0 0 100 300" fill="none" stroke="#fff" stroke-width="2.100" stroke-linecap="round"><path d="M46.800 236.100h6.200a4.400 4.400 0 0 1 4.400 4.400v9.600a4.400 4.400 0 0 1-4.400 4.400h-6.200a4.400 4.400 0 0 1-4.400-4.400v-9.600a4.400 4.400 0 0 1 4.400-4.400z"/><circle cx="43.500" cy="237.200" r="1.200" fill="#404040" stroke="none"/><path d="M47 256.600h6M48.300 258.800h3.400" stroke-width="1.300"/></svg>
<div class="t" style="top:240.00px;font-size:12.5px;color:#fff;left:62.70px;transform:scaleX(0.9862);-webkit-text-stroke:0.3px #fff;">LUZ</div>
<div class="a" style="left:91px;top:239px;width:1px;height:14px;background:#9a9a9a;"></div>
<div class="t" style="top:241.00px;font-size:6px;color:#d8d8d8;left:95.40px;transform:scaleX(0.9196);">Planilhas</div>
<div class="t" style="top:247.00px;font-size:6px;color:#d8d8d8;left:95.40px;transform:scaleX(0.9310);">Empresariais</div>
<div class="tc" style="top:235.00px;font-size:11.5px;color:#fff;font-weight:bold;left:14.20px;width:400px;transform:scaleX(0.9251);"><span>FATORES DE</span></div>
<div class="tc" style="top:251.00px;font-size:11.5px;color:#fff;font-weight:bold;left:14.50px;width:400px;transform:scaleX(0.8845);"><span>RISCOS</span></div>
<div class="tc" style="top:235.00px;font-size:11.5px;color:#fff;font-weight:bold;left:129.20px;width:400px;"><span>MAPEAMENTO</span></div>
<div class="tc" style="top:251.00px;font-size:11.5px;color:#fff;font-weight:bold;left:129.00px;width:400px;transform:scaleX(0.8946);"><span>DE RISCOS</span></div>
<div class="tc" style="top:243.00px;font-size:11.5px;color:#fff;font-weight:bold;left:243.20px;width:400px;transform:scaleX(0.9162);"><span>RELATÓRIOS</span></div>
<div class="tc" style="top:243.00px;font-size:11.5px;color:#fff;font-weight:bold;left:357.50px;width:400px;transform:scaleX(0.9418);"><span>DASHBOARD</span></div>
<div class="tc" style="top:243.00px;font-size:11.5px;color:#fff;font-weight:bold;left:472.50px;width:400px;transform:scaleX(0.9230);"><span>INSTRUÇÕES</span></div>
<div class="tc" style="top:288.00px;font-size:11.5px;color:#000;font-weight:bold;left:0.30px;width:400px;transform:scaleX(0.9130);"><span>FATORES DE RISCOS</span></div>
<div class="a" style="left:50px;top:321px;width:308px;height:33px;background:#bfbfbf;"></div>
<div class="tc" style="top:332.00px;font-size:11.5px;color:#404040;font-weight:bold;left:3.40px;width:400px;transform:scaleX(0.9651);"><span>Fator Consequência</span></div>
<div class="a" style="left:50px;top:357px;width:200px;height:33px;background:#d9d9d9;"></div>
<div class="a" style="left:253px;top:357px;width:105px;height:33px;background:#d9d9d9;"></div>
<div class="t" style="top:369.00px;font-size:11.5px;color:#404040;font-weight:bold;left:59.00px;transform:scaleX(0.8760);">Classificação</div>
<div class="t" style="top:369.00px;font-size:11.5px;color:#404040;font-weight:bold;left:262.50px;transform:scaleX(1.0057);">Valor</div>
<div class="a" style="left:48px;top:393px;width:312px;height:257px;background:#d9d9d9;"></div>
<div class="a" style="left:49px;top:393px;width:202px;height:41px;background:#f2f2f2;"></div>
<div class="a" style="left:252px;top:393px;width:107px;height:41px;background:#f2f2f2;"></div>
<div class="a" style="left:49px;top:435px;width:202px;height:42px;background:#f2f2f2;"></div>
<div class="a" style="left:252px;top:435px;width:107px;height:42px;background:#f2f2f2;"></div>
<div class="a" style="left:49px;top:478px;width:202px;height:42px;background:#f2f2f2;"></div>
<div class="a" style="left:252px;top:478px;width:107px;height:42px;background:#f2f2f2;"></div>
<div class="a" style="left:49px;top:521px;width:202px;height:42px;background:#f2f2f2;"></div>
<div class="a" style="left:252px;top:521px;width:107px;height:42px;background:#f2f2f2;"></div>
<div class="a" style="left:49px;top:564px;width:202px;height:42px;background:#f2f2f2;"></div>
<div class="a" style="left:252px;top:564px;width:107px;height:42px;background:#f2f2f2;"></div>
<div class="a" style="left:49px;top:607px;width:202px;height:42px;background:#f2f2f2;"></div>
<div class="a" style="left:252px;top:607px;width:107px;height:42px;background:#f2f2f2;"></div>
<div class="t" style="top:399.00px;font-size:11.5px;color:#000;left:59.00px;transform:scaleX(1.0986);">Catastrófico quebra da atividade</div>
<div class="t" style="top:416.00px;font-size:11.5px;color:#000;left:59.00px;transform:scaleX(1.0648);">fim da empresa</div>
<div class="t" style="top:408.00px;font-size:11.5px;color:#000;left:262.50px;transform:scaleX(1.0684);">100</div>
<div class="t" style="top:451.00px;font-size:11.5px;color:#000;left:59.00px;">Severo – Prejuízos</div>
<div class="t" style="top:451.00px;font-size:11.5px;color:#000;left:262.50px;transform:scaleX(1.0315);">50</div>
<div class="t" style="top:494.00px;font-size:11.5px;color:#000;left:59.00px;transform:scaleX(1.0151);">Grave</div>
<div class="t" style="top:494.00px;font-size:11.5px;color:#000;left:262.50px;transform:scaleX(1.0315);">25</div>
<div class="t" style="top:537.00px;font-size:11.5px;color:#000;left:59.00px;transform:scaleX(1.0927);">Moderado</div>
<div class="t" style="top:537.00px;font-size:11.5px;color:#000;left:262.50px;transform:scaleX(1.0315);">15</div>
<div class="t" style="top:580.00px;font-size:11.5px;color:#000;left:59.00px;transform:scaleX(0.9023);">Leve</div>
<div class="t" style="top:580.00px;font-size:11.5px;color:#000;left:262.50px;transform:scaleX(0.9678);">5</div>
<div class="t" style="top:623.00px;font-size:11.5px;color:#000;left:59.00px;transform:scaleX(1.0400);">Nenhum – Pequeno impacto</div>
<div class="t" style="top:623.00px;font-size:11.5px;color:#000;left:262.50px;transform:scaleX(0.8585);">1</div>
<div class="a" style="left:373px;top:321px;width:316px;height:33px;background:#bfbfbf;"></div>
<div class="tc" style="top:332.00px;font-size:11.5px;color:#404040;font-weight:bold;left:330.80px;width:400px;transform:scaleX(0.9189);"><span>Fator Exposição ao Risco</span></div>
<div class="a" style="left:373px;top:357px;width:208px;height:33px;background:#d9d9d9;"></div>
<div class="a" style="left:584px;top:357px;width:105px;height:33px;background:#d9d9d9;"></div>
<div class="t" style="top:369.00px;font-size:11.5px;color:#404040;font-weight:bold;left:382.40px;transform:scaleX(0.8760);">Classificação</div>
<div class="t" style="top:369.00px;font-size:11.5px;color:#404040;font-weight:bold;left:593.30px;transform:scaleX(1.0057);">Valor</div>
<div class="a" style="left:371px;top:393px;width:320px;height:257px;background:#d9d9d9;"></div>
<div class="a" style="left:372px;top:393px;width:210px;height:41px;background:#f2f2f2;"></div>
<div class="a" style="left:583px;top:393px;width:107px;height:41px;background:#f2f2f2;"></div>
<div class="a" style="left:372px;top:435px;width:210px;height:42px;background:#f2f2f2;"></div>
<div class="a" style="left:583px;top:435px;width:107px;height:42px;background:#f2f2f2;"></div>
<div class="a" style="left:372px;top:478px;width:210px;height:42px;background:#f2f2f2;"></div>
<div class="a" style="left:583px;top:478px;width:107px;height:42px;background:#f2f2f2;"></div>
<div class="a" style="left:372px;top:521px;width:210px;height:42px;background:#f2f2f2;"></div>
<div class="a" style="left:583px;top:521px;width:107px;height:42px;background:#f2f2f2;"></div>
<div class="a" style="left:372px;top:564px;width:210px;height:42px;background:#f2f2f2;"></div>
<div class="a" style="left:583px;top:564px;width:107px;height:42px;background:#f2f2f2;"></div>
<div class="a" style="left:372px;top:607px;width:210px;height:42px;background:#f2f2f2;"></div>
<div class="a" style="left:583px;top:607px;width:107px;height:42px;background:#f2f2f2;"></div>
<div class="t" style="top:408.00px;font-size:11.5px;color:#000;left:382.40px;transform:scaleX(1.0486);">Várias vezes ao dia.</div>
<div class="t" style="top:408.00px;font-size:11.5px;color:#000;left:593.30px;transform:scaleX(1.0706);">10</div>
<div class="t" style="top:451.00px;font-size:11.5px;color:#000;left:382.40px;transform:scaleX(1.0385);">Uma vez ao dia, frequentemente.</div>
<div class="t" style="top:451.00px;font-size:11.5px;color:#000;left:593.30px;transform:scaleX(0.9678);">5</div>
<div class="t" style="top:485.00px;font-size:11.5px;color:#000;left:382.40px;transform:scaleX(1.0308);">Uma vez por semana ou ao mês,</div>
<div class="t" style="top:502.00px;font-size:11.5px;color:#000;left:382.40px;transform:scaleX(1.0842);">ocasionalmente.</div>
<div class="t" style="top:494.00px;font-size:11.5px;color:#000;left:593.30px;transform:scaleX(0.9678);">3</div>
<div class="t" style="top:528.00px;font-size:11.5px;color:#000;left:382.40px;transform:scaleX(1.0254);">Uma vez ao ano ou ao mês,</div>
<div class="t" style="top:545.00px;font-size:11.5px;color:#000;left:382.40px;transform:scaleX(1.0990);">irregularmente.</div>
<div class="t" style="top:537.00px;font-size:11.5px;color:#000;left:593.30px;transform:scaleX(0.9678);">2</div>
<div class="t" style="top:571.00px;font-size:11.5px;color:#000;left:382.40px;transform:scaleX(1.0310);">Raramente possível, sabe-se que</div>
<div class="t" style="top:588.00px;font-size:11.5px;color:#000;left:382.40px;transform:scaleX(1.0660);">ocorre, mas não com frequência</div>
<div class="t" style="top:580.00px;font-size:11.5px;color:#000;left:593.30px;transform:scaleX(0.8585);">1</div>
<div class="t" style="top:614.00px;font-size:11.5px;color:#000;left:382.40px;transform:scaleX(1.0312);">Remotamente possível, não sabe se</div>
<div class="t" style="top:631.00px;font-size:11.5px;color:#000;left:382.40px;transform:scaleX(1.0931);">já ocorreu</div>
<div class="t" style="top:623.00px;font-size:11.5px;color:#000;left:593.30px;transform:scaleX(1.0312);">0,5</div>
<div class="a" style="left:704px;top:321px;width:327px;height:33px;background:#bfbfbf;"></div>
<div class="tc" style="top:332.00px;font-size:11.5px;color:#404040;font-weight:bold;left:667.50px;width:400px;transform:scaleX(0.9833);"><span>Fator Probabilidade</span></div>
<div class="a" style="left:704px;top:357px;width:220px;height:33px;background:#d9d9d9;"></div>
<div class="a" style="left:927px;top:357px;width:104px;height:33px;background:#d9d9d9;"></div>
<div class="t" style="top:369.00px;font-size:11.5px;color:#404040;font-weight:bold;left:713.20px;transform:scaleX(0.8760);">Classificação</div>
<div class="t" style="top:369.00px;font-size:11.5px;color:#404040;font-weight:bold;left:936.40px;transform:scaleX(1.0057);">Valor</div>
<div class="a" style="left:702px;top:393px;width:331px;height:257px;background:#d9d9d9;"></div>
<div class="a" style="left:703px;top:393px;width:222px;height:41px;background:#f2f2f2;"></div>
<div class="a" style="left:926px;top:393px;width:106px;height:41px;background:#f2f2f2;"></div>
<div class="a" style="left:703px;top:435px;width:222px;height:42px;background:#f2f2f2;"></div>
<div class="a" style="left:926px;top:435px;width:106px;height:42px;background:#f2f2f2;"></div>
<div class="a" style="left:703px;top:478px;width:222px;height:42px;background:#f2f2f2;"></div>
<div class="a" style="left:926px;top:478px;width:106px;height:42px;background:#f2f2f2;"></div>
<div class="a" style="left:703px;top:521px;width:222px;height:42px;background:#f2f2f2;"></div>
<div class="a" style="left:926px;top:521px;width:106px;height:42px;background:#f2f2f2;"></div>
<div class="a" style="left:703px;top:564px;width:222px;height:42px;background:#f2f2f2;"></div>
<div class="a" style="left:926px;top:564px;width:106px;height:42px;background:#f2f2f2;"></div>
<div class="a" style="left:703px;top:607px;width:222px;height:42px;background:#f2f2f2;"></div>
<div class="a" style="left:926px;top:607px;width:106px;height:42px;background:#f2f2f2;"></div>
<div class="t" style="top:408.00px;font-size:11.5px;color:#000;left:713.20px;transform:scaleX(1.0308);">Espera-se que aconteça.</div>
<div class="t" style="top:408.00px;font-size:11.5px;color:#000;left:936.40px;transform:scaleX(1.0706);">10</div>
<div class="t" style="top:442.00px;font-size:11.5px;color:#000;left:713.20px;transform:scaleX(1.0299);">Completamente possível – 50% de</div>
<div class="t" style="top:459.00px;font-size:11.5px;color:#000;left:713.20px;transform:scaleX(1.0460);">chance</div>
<div class="t" style="top:451.00px;font-size:11.5px;color:#000;left:936.40px;transform:scaleX(0.9678);">6</div>
<div class="t" style="top:494.00px;font-size:11.5px;color:#000;left:713.20px;transform:scaleX(1.0638);">Coincidência se acontecer</div>
<div class="t" style="top:494.00px;font-size:11.5px;color:#000;left:936.40px;transform:scaleX(0.9678);">3</div>
<div class="t" style="top:537.00px;font-size:11.5px;color:#000;left:713.20px;transform:scaleX(1.0797);">Coincidência remota</div>
<div class="t" style="top:537.00px;font-size:11.5px;color:#000;left:936.40px;transform:scaleX(0.8585);">1</div>
<div class="t" style="top:580.00px;font-size:11.5px;color:#000;left:713.20px;transform:scaleX(1.0447);">Extremamente remota, porém possível</div>
<div class="t" style="top:580.00px;font-size:11.5px;color:#000;left:936.40px;transform:scaleX(1.0312);">0,5</div>
<div class="t" style="top:614.00px;font-size:11.5px;color:#000;left:713.20px;transform:scaleX(1.0627);">Praticamente impossível, uma chance</div>
<div class="t" style="top:631.00px;font-size:11.5px;color:#000;left:713.20px;transform:scaleX(1.0731);">em um milhão</div>
<div class="t" style="top:623.00px;font-size:11.5px;color:#000;left:936.40px;">0,1</div>
<div class="a" style="left:1047px;top:321px;width:115px;height:33px;background:#d9d9d9;"></div>
<div class="a" style="left:1165px;top:321px;width:104px;height:33px;background:#d9d9d9;"></div>
<div class="t" style="top:333.00px;font-size:11.5px;color:#404040;font-weight:bold;left:1056.20px;transform:scaleX(0.9810);">Fator de Custo</div>
<div class="t" style="top:333.00px;font-size:11.5px;color:#404040;font-weight:bold;left:1174.00px;transform:scaleX(1.0092);">Valor</div>
<div class="a" style="left:1045px;top:357px;width:226px;height:293px;background:#d9d9d9;"></div>
<div class="a" style="left:1046px;top:357px;width:117px;height:34px;background:#f2f2f2;"></div>
<div class="a" style="left:1164px;top:357px;width:106px;height:34px;background:#f2f2f2;"></div>
<div class="a" style="left:1046px;top:392px;width:117px;height:42px;background:#f2f2f2;"></div>
<div class="a" style="left:1164px;top:392px;width:106px;height:42px;background:#f2f2f2;"></div>
<div class="a" style="left:1046px;top:435px;width:117px;height:42px;background:#f2f2f2;"></div>
<div class="a" style="left:1164px;top:435px;width:106px;height:42px;background:#f2f2f2;"></div>
<div class="a" style="left:1046px;top:478px;width:117px;height:42px;background:#f2f2f2;"></div>
<div class="a" style="left:1164px;top:478px;width:106px;height:42px;background:#f2f2f2;"></div>
<div class="a" style="left:1046px;top:521px;width:117px;height:42px;background:#f2f2f2;"></div>
<div class="a" style="left:1164px;top:521px;width:106px;height:42px;background:#f2f2f2;"></div>
<div class="a" style="left:1046px;top:564px;width:117px;height:42px;background:#f2f2f2;"></div>
<div class="a" style="left:1164px;top:564px;width:106px;height:42px;background:#f2f2f2;"></div>
<div class="a" style="left:1046px;top:607px;width:117px;height:42px;background:#f2f2f2;"></div>
<div class="a" style="left:1164px;top:607px;width:106px;height:42px;background:#f2f2f2;"></div>
<div class="t" style="top:369.00px;font-size:11.5px;color:#000;left:1056.20px;transform:scaleX(1.0054);">R$ 0,00</div>
<div class="t" style="top:369.00px;font-size:11.5px;color:#000;left:1174.00px;transform:scaleX(1.0312);">0,5</div>
<div class="t" style="top:408.00px;font-size:11.5px;color:#000;left:1056.20px;transform:scaleX(1.0195);">R$ 50,00</div>
<div class="t" style="top:408.00px;font-size:11.5px;color:#000;left:1174.00px;transform:scaleX(0.8585);">1</div>
<div class="t" style="top:451.00px;font-size:11.5px;color:#000;left:1056.20px;transform:scaleX(1.0268);">R$ 200,00</div>
<div class="t" style="top:451.00px;font-size:11.5px;color:#000;left:1174.00px;transform:scaleX(0.9678);">2</div>
<div class="t" style="top:494.00px;font-size:11.5px;color:#000;left:1056.20px;transform:scaleX(1.0292);">R$ 2.000,00</div>
<div class="t" style="top:494.00px;font-size:11.5px;color:#000;left:1174.00px;transform:scaleX(0.9678);">3</div>
<div class="t" style="top:537.00px;font-size:11.5px;color:#000;left:1056.20px;transform:scaleX(1.0353);">R$ 20.000,00</div>
<div class="t" style="top:537.00px;font-size:11.5px;color:#000;left:1174.00px;transform:scaleX(1.0146);">4</div>
<div class="t" style="top:580.00px;font-size:11.5px;color:#000;left:1056.20px;transform:scaleX(1.0353);">R$ 50.000,00</div>
<div class="t" style="top:580.00px;font-size:11.5px;color:#000;left:1174.00px;transform:scaleX(0.9678);">6</div>
<div class="t" style="top:623.00px;font-size:11.5px;color:#000;left:1056.20px;transform:scaleX(1.0404);">R$ 100.000,00</div>
<div class="t" style="top:623.00px;font-size:11.5px;color:#000;left:1174.00px;transform:scaleX(1.0706);">10</div>
<div class="a" style="left:50px;top:668px;width:308px;height:33px;background:#bfbfbf;"></div>
<div class="tc" style="top:679.00px;font-size:11.5px;color:#404040;font-weight:bold;left:3.60px;width:400px;transform:scaleX(0.9747);"><span>Grau de Correção</span></div>
<div class="a" style="left:50px;top:704px;width:200px;height:33px;background:#d9d9d9;"></div>
<div class="a" style="left:253px;top:704px;width:105px;height:33px;background:#d9d9d9;"></div>
<div class="a" style="left:373px;top:668px;width:316px;height:33px;background:#bfbfbf;"></div>
<div class="tc" style="top:679.00px;font-size:11.5px;color:#404040;font-weight:bold;left:330.80px;width:400px;transform:scaleX(0.9765);"><span>Grau de Criticidade</span></div>
<div class="a" style="left:373px;top:704px;width:208px;height:33px;background:#d9d9d9;"></div>
<div class="a" style="left:584px;top:704px;width:105px;height:33px;background:#d9d9d9;"></div>
<div class="a" style="left:704px;top:668px;width:327px;height:33px;background:#bfbfbf;"></div>
<div class="tc" style="top:679.00px;font-size:11.5px;color:#404040;font-weight:bold;left:667.00px;width:400px;transform:scaleX(0.9399);"><span>Escala de Valoração do Índice de Justificação</span></div>
<div class="a" style="left:704px;top:704px;width:220px;height:33px;background:#d9d9d9;"></div>
<div class="a" style="left:927px;top:704px;width:104px;height:33px;background:#d9d9d9;"></div>
<div class="t" style="top:711.00px;font-size:11.5px;color:#404040;font-weight:bold;left:593.30px;transform:scaleX(0.9432);">Grau de</div>
</div></div>
<div class="a" style="left:24px;top:222px;width:17px;height:50px;border:2px solid #217346"></div>
<div class="a" style="left:26px;top:224px;width:13px;height:46px;border:1px solid #fff"></div>
<div class="a" style="left:36px;top:267px;width:6px;height:6px;background:#217346;border-left:1px solid #fff;border-top:1px solid #fff"></div>
<div class="a" style="left:1345px;top:207px;width:21px;height:510px;background:#e6e6e6;"></div>
<div class="a" style="left:1344px;top:223px;width:1px;height:494px;background:#b0b0b0;"></div>
<div class="a" style="left:1348px;top:209px;width:15px;height:15px;background:#fff;border:1px solid #ababab"></div>
<div class="a" style="left:1351.5px;top:214px;width:0;height:0;border-left:4px solid transparent;border-right:4px solid transparent;border-bottom:4px solid #777"></div>
<div class="a" style="left:1348px;top:224px;width:15px;height:20px;background:#fff;border:1px solid #ababab"></div>
<div class="a" style="left:1348px;top:244px;width:15px;height:459px;background:#dcdcdc;"></div>
<div class="a" style="left:1348px;top:703px;width:15px;height:14px;background:#fff;border:1px solid #ababab"></div>
<div class="a" style="left:1351.5px;top:708px;width:0;height:0;border-left:4px solid transparent;border-right:4px solid transparent;border-top:4px solid #777"></div>
<div class="a" style="left:0;top:717px;width:1366px;height:29px;background:#e6e6e6"></div><div class="a" style="left:0;top:717px;width:1345px;height:1px;background:#9f9f9f"></div>
<div class="a" style="left:26px;top:726px;width:0;height:0;border-top:4px solid transparent;border-bottom:4px solid transparent;border-right:5px solid #c3c3c3"></div>
<div class="a" style="left:56px;top:726px;width:0;height:0;border-top:4px solid transparent;border-bottom:4px solid transparent;border-left:5px solid #c3c3c3"></div>
<div class="a" style="left:100px;top:718px;width:44px;height:24px;background:#fff;border-bottom:2px solid #217346;border-left:1px solid #c6c6c6;border-right:1px solid #c6c6c6"></div>
<div class="t" style="top:724.00px;font-size:13px;color:#217346;font-weight:bold;left:112.00px;transform:scaleX(0.9744);">Fat</div>
<div class="t" style="top:724.00px;font-size:13px;color:#444;left:155.00px;transform:scaleX(1.0278);">Map</div>
<div class="t" style="top:724.00px;font-size:13px;color:#444;left:205.00px;transform:scaleX(0.9052);">RC</div>
<div class="t" style="top:724.00px;font-size:13px;color:#444;left:245.00px;transform:scaleX(0.9231);">RI</div>
<div class="t" style="top:724.00px;font-size:13px;color:#444;left:283.00px;transform:scaleX(0.9135);">DASH</div>
<div class="t" style="top:724.00px;font-size:13px;color:#444;left:342.00px;transform:scaleX(1.0226);">INI</div>
<div class="t" style="top:724.00px;font-size:13px;color:#444;left:384.00px;transform:scaleX(0.9835);">DUV</div>
<div class="t" style="top:724.00px;font-size:13px;color:#444;left:435.00px;transform:scaleX(0.9229);">SUG</div>
<div class="t" style="top:724.00px;font-size:13px;color:#444;left:485.00px;transform:scaleX(0.9364);">LUZ</div>
<div class="a" style="left:194px;top:721px;width:1px;height:19px;background:#ababab;"></div>
<div class="a" style="left:234px;top:721px;width:1px;height:19px;background:#ababab;"></div>
<div class="a" style="left:270px;top:721px;width:1px;height:19px;background:#ababab;"></div>
<div class="a" style="left:330px;top:721px;width:1px;height:19px;background:#ababab;"></div>
<div class="a" style="left:372px;top:721px;width:1px;height:19px;background:#ababab;"></div>
<div class="a" style="left:424px;top:721px;width:1px;height:19px;background:#ababab;"></div>
<div class="a" style="left:473px;top:721px;width:1px;height:19px;background:#ababab;"></div>
<div class="a" style="left:520px;top:721px;width:1px;height:19px;background:#ababab;"></div>
<svg style="left:553px;top:722px" width="17" height="17" viewBox="0 0 17 17" fill="none" stroke="#666" stroke-width="1"><circle cx="8.500" cy="8.500" r="7.500"/><path d="M8.500 4.500v8M4.500 8.500h8"/></svg>
<div class="a" style="left:591px;top:725px;width:2px;height:2px;background:#b0b0b0;"></div>
<div class="a" style="left:591px;top:730px;width:2px;height:2px;background:#b0b0b0;"></div>
<div class="a" style="left:591px;top:735px;width:2px;height:2px;background:#b0b0b0;"></div>
<div class="a" style="left:623px;top:724px;width:704px;height:15px;background:#dcdcdc;"></div>
<div class="a" style="left:608px;top:724px;width:15px;height:15px;background:#fff;border:1px solid #c1c1c1"></div>
<div class="a" style="left:613px;top:727.5px;width:0;height:0;border-top:4px solid transparent;border-bottom:4px solid transparent;border-right:4px solid #555"></div>
<div class="a" style="left:623px;top:724px;width:653px;height:15px;background:#fff;border:1px solid #c1c1c1"></div>
<div class="a" style="left:1330px;top:724px;width:14px;height:15px;background:#fff;border:1px solid #c1c1c1"></div>
<div class="a" style="left:1335px;top:727.5px;width:0;height:0;border-top:4px solid transparent;border-bottom:4px solid transparent;border-left:4px solid #555"></div>
<div class="a" style="left:0;top:745px;width:1366px;height:21px;background:#f3f2f1;border-top:1px solid #d4d4d4"></div>
<svg style="left:8px;top:749px" width="14" height="14" viewBox="0 0 14 14" fill="none" stroke="#555" stroke-width="1"><path d="M2.500 4.500h11v9h-11z"/><path d="M2.500 7.500h11M2.500 10.500h11M6.500 7.500v6M9.500 7.500v6"/><circle cx="3" cy="3" r="3" fill="#555" stroke="none"/></svg>
<div class="a" style="left:1086px;top:746px;width:38px;height:20px;background:#c8c6c4;"></div>
<svg style="left:1098px;top:749px" width="13" height="13" viewBox="0 0 13 13" fill="none" stroke="#666" stroke-width="1.200"><path d="M0.500 0.500h12v12h-12z"/><path d="M4.500 0.500v12M8.500 0.500v12M0.500 4.500h12M0.500 8.500h12"/></svg>
<svg style="left:1136px;top:749px" width="14" height="13" viewBox="0 0 14 13" fill="none" stroke="#666" stroke-width="1.100"><path d="M0.500 0.500h13v12h-13z"/><path d="M3.500 2.500h7v8h-7z"/><path d="M5.500 4.500h3M5.500 6.500h3M5.500 8.500h3" stroke-width="1"/></svg>
<svg style="left:1174px;top:749px" width="14" height="13" viewBox="0 0 14 13" fill="none" stroke="#666" stroke-width="1.100"><path d="M0.500 0.500h13v12h-13z"/><path d="M4.500 0.500v7M8.500 0.500v7h-8"/></svg>
<div class="a" style="left:1205px;top:755px;width:6px;height:2px;background:#555;"></div>
<div class="a" style="left:1215px;top:756px;width:100px;height:1px;background:#a0a0a0;"></div>
<div class="a" style="left:1265px;top:753px;width:1px;height:7px;background:#a0a0a0;"></div>
<div class="a" style="left:1258px;top:750px;width:4px;height:11px;background:#666;"></div>
<div class="a" style="left:1318px;top:755px;width:8px;height:2px;background:#555;"></div>
<div class="a" style="left:1321px;top:752px;width:2px;height:8px;background:#555;"></div>
<div class="t" style="top:750.00px;font-size:11px;color:#444;left:1337.90px;transform:scaleX(0.8987);">90%</div>
<div class="a" style="left:0px;top:766px;width:1366px;height:2px;background:#2a2a2a;"></div>
<div class="a" style="left:48px;top:766px;width:344px;height:2px;background:#cfcfcf;"></div>
</body></html>
